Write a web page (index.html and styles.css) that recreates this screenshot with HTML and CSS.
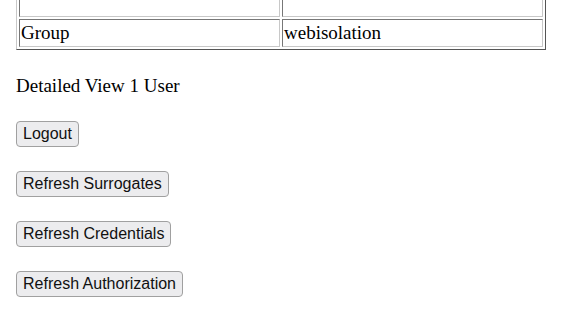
FILE: index.html
```html
<!DOCTYPE html>
<html lang="en">
<head>
    <meta charset="UTF-8">
    <title>Detailed View</title>
    <link rel="stylesheet" href="styles.css">
</head>
<body>
    <div class="page">
        <table class="info" cellspacing="2">
            <tr>
                <td>&nbsp;</td>
                <td>&nbsp;</td>
            </tr>
            <tr>
                <td>Group</td>
                <td>webisolation</td>
            </tr>
        </table>

        <p class="summary">Detailed View 1 User</p>

        <form class="action"><button type="button">Logout</button></form>
        <form class="action"><button type="button">Refresh Surrogates</button></form>
        <form class="action"><button type="button">Refresh Credentials</button></form>
        <form class="action"><button type="button">Refresh Authorization</button></form>
    </div>
</body>
</html>
```

FILE: styles.css
```css
body {
    margin: 0;
    font-family: "Liberation Serif", serif;
    font-size: 19px;
    color: #000;
    background: #fff;
}
.page {
    padding: 0 16px;
    margin-top: -14px;
}
.info {
    width: 100%;
    border: 1px solid;
    border-color: #c8c8c8 #555 #555 #c8c8c8;
}
.info td {
    width: 50%;
    padding: 2px 1px;
    border: 1px solid;
    border-color: #777 #c8c8c8 #c8c8c8 #777;
}
.summary {
    margin: 25px 0 24px;
}
.action {
    margin: 0 0 24px;
}
.action button {
    font-family: "Liberation Sans", sans-serif;
    font-size: 16px;
    height: 26px;
    padding: 0 6px;
    color: #111;
    background: #ececee;
    border: 1px solid #a0a0a0;
    border-radius: 4px;
}
```
